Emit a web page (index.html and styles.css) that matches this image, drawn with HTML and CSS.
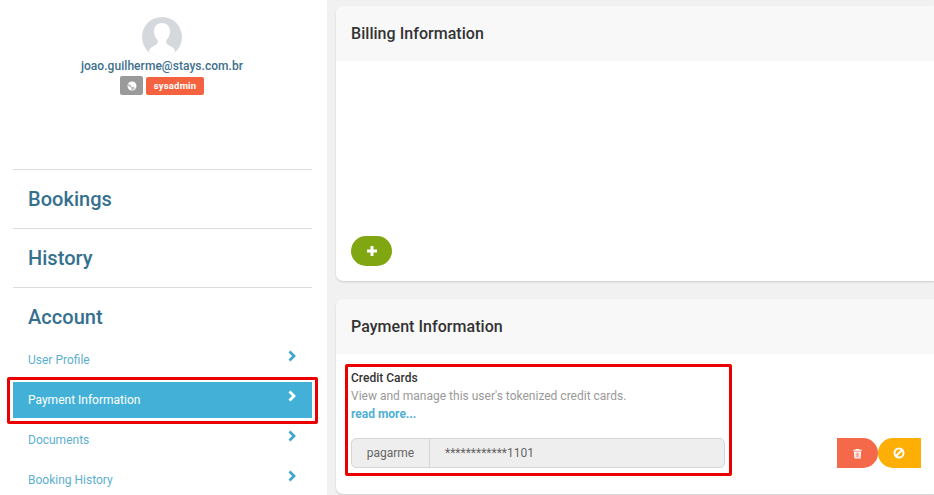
FILE: index.html
```html
<!DOCTYPE html>
<html lang="en">
<head>
<meta charset="utf-8">
<title>Payment Information</title>
<link rel="stylesheet" href="styles.css">
</head>
<body>
<div class="page">
  <aside class="sidebar">
    <div class="profile">
      <svg class="avatar" viewBox="0 0 40 40" width="40" height="40" aria-hidden="true">
        <defs><clipPath id="av"><circle cx="20" cy="20" r="20"/></clipPath></defs>
        <g clip-path="url(#av)">
          <rect width="40" height="40" fill="#d5d9dd"/>
          <path d="M20 6c-5 0-8 3.500-8 8.500 0 3.500 1.500 6.500 3.500 8.500 .6 1.500 .4 3-.5 4-2 2-6 3-7.500 5.500-1 2-1 5-1 8h27c0-3 0-6-1-8-1.500-2.500-5.500-3.500-7.500-5.500-.9-1-1.100-2.500-.5-4 2-2 3.500-5 3.500-8.500C28 9.500 25 6 20 6z" fill="#fff"/>
        </g>
      </svg>
      <div class="email">joao.guilherme@stays.com.br</div>
      <div class="badges">
        <span class="badge badge-globe">
          <svg viewBox="0 0 10 10" width="10" height="10" aria-hidden="true"><circle cx="5" cy="5" r="4.500" fill="#fff"/><path d="M1 3 4 4 4.500 6 6.500 5.500 8 7 6 9 4.500 9 4 6.500 1 5z" fill="#a5a5a5" opacity=".7"/></svg>
        </span>
        <span class="badge badge-role">sysadmin</span>
      </div>
    </div>
    <nav class="nav">
      <div class="section">Bookings</div>
      <div class="section">History</div>
      <div class="section section-open">Account</div>
      <a class="item">User Profile<svg class="chev" viewBox="0 0 8 12" width="8" height="12"><path d="M1.500 1.500 6 6l-4.500 4.500"/></svg></a>
      <a class="item item-active">Payment Information<svg class="chev" viewBox="0 0 8 12" width="8" height="12"><path d="M1.500 1.500 6 6l-4.500 4.500"/></svg></a>
      <a class="item">Documents<svg class="chev" viewBox="0 0 8 12" width="8" height="12"><path d="M1.500 1.500 6 6l-4.500 4.500"/></svg></a>
      <a class="item">Booking History<svg class="chev" viewBox="0 0 8 12" width="8" height="12"><path d="M1.500 1.500 6 6l-4.500 4.500"/></svg></a>
    </nav>
  </aside>
  <main class="main">
    <section class="card card-billing">
      <h2 class="card-head">Billing Information</h2>
      <div class="billing-body">
        <button class="add" aria-label="Add">
          <svg viewBox="0 0 12 12" width="12" height="12"><path d="M6 1v10M1 6h10"/></svg>
        </button>
      </div>
    </section>
    <section class="card">
      <h2 class="card-head">Payment Information</h2>
      <div class="pay-body">
        <div class="cards-block">
          <div class="cc-title">Credit Cards</div>
          <div class="cc-desc">View and manage this user's tokenized credit cards.</div>
          <a class="cc-more">read more...</a>
          <div class="cc-input">
            <span class="cc-gateway">pagarme</span>
            <span class="cc-number">************1101</span>
          </div>
        </div>
        <div class="actions">
          <button class="act act-del" aria-label="Delete">
            <svg viewBox="0 0 10 10" width="11" height="11"><path fill="#fff" d="M3.500.8h3l.4.8H9v1H1v-1h2.100zM1.700 3.200h6.600L7.800 9.600H2.200z"/><path stroke="#f4694a" stroke-width=".6" d="M3.800 4.200v4.400M5 4.200v4.400M6.200 4.200v4.400"/></svg>
          </button>
          <button class="act act-ban" aria-label="Block">
            <svg viewBox="0 0 12 12" width="12" height="12"><circle cx="6" cy="6" r="4.500" fill="none" stroke="#fff" stroke-width="2"/><path d="M3 9 9 3" stroke="#fff" stroke-width="2"/></svg>
          </button>
        </div>
      </div>
    </section>
  </main>
</div>
<div class="mark mark-nav"></div>
<div class="mark mark-cards"></div>
</body>
</html>
```
FILE: styles.css
```css
* { box-sizing: border-box; }
html, body { margin: 0; height: 495px; overflow: hidden; }
body { font-family: Roboto, "Liberation Sans", sans-serif; background: #f1f1f1; position: relative; }
.page { display: flex; width: 934px; height: 495px; }

.sidebar { width: 327px; flex: none; background: #fff; padding: 0 15px 0 13px; }
.profile { height: 169px; padding: 17px 1px 0 0; display: flex; flex-direction: column; align-items: center; }
.avatar { display: block; margin-right: 1px; }
.email { margin-top: 2px; font-size: 12px; line-height: 14px; font-weight: 500; color: #3e6f8e; letter-spacing: .05px; white-space: nowrap; }
.badges { display: flex; align-items: center; gap: 3px; margin-top: 3px; }
.badge { display: flex; align-items: center; justify-content: center; height: 18px; border-radius: 2px; color: #fff; }
.badge-globe { width: 23px; height: 19px; background: #9a9a9a; }
.badge-role { width: 58px; background: #f4623f; font-size: 9.500px; font-weight: 700; letter-spacing: .2px; }

.nav { display: flex; flex-direction: column; }
.section { height: 59px; border-top: 1px solid #dcdcdc; padding: 0 15px; display: flex; align-items: center; font-size: 20px; font-weight: 500; color: #36708f; letter-spacing: .04px; }
.section-open { height: 53px; padding-top: 6px; }
.item { height: 40px; padding: 0 16px 0 15px; display: flex; align-items: center; justify-content: space-between; font-size: 12px; color: #5cafd0; }
.item .chev { margin-top: -9px; }
.chev path { fill: none; stroke: #42a5cc; stroke-width: 2.800; }
.item-active { margin: 2px 0; height: 36px; color: #fff; background: #43b1d7; font-weight: 400; }
.item-active .chev path { stroke: #fff; }

.main { flex: 1; min-width: 0; padding: 6px 0 0 9px; display: flex; flex-direction: column; gap: 18px; }
.card { background: #fff; border-radius: 7px 0 0 7px; box-shadow: 0 1px 2px rgba(0,0,0,.16); }
.card-billing { height: 275px; display: flex; flex-direction: column; flex: none; }
.card-head { margin: 0; height: 55px; padding: 0 15px; display: flex; align-items: center; background: #f8f8f8; font-size: 16px; font-weight: 500; color: #333; letter-spacing: .04px; border-radius: 7px 0 0 0; }
.billing-body { flex: 1; padding: 175px 15px 0; }
.add { width: 41px; height: 30px; border: 0; border-radius: 15px; background: #80a612; display: flex; align-items: center; justify-content: center; padding: 0; }
.add path { stroke: #fff; stroke-width: 3; }

.pay-body { display: flex; justify-content: space-between; align-items: flex-end; padding: 15px 13px 26px 15px; }
.cards-block { width: 374px; }
.cc-title { font-size: 12px; line-height: 18px; font-weight: 500; color: #333; }
.cc-desc { font-size: 12px; line-height: 18px; color: #999; }
.cc-more { display: block; font-size: 12px; line-height: 18px; font-weight: 700; color: #4fb0d5; }
.cc-input { margin-top: 15px; height: 30px; display: flex; align-items: center; background: #eee; border: 1px solid #d6d6d6; border-radius: 5px; font-size: 12px; color: #666; }
.cc-gateway { width: 78px; height: 100%; display: flex; align-items: center; justify-content: center; border-right: 1px solid #d6d6d6; }
.cc-number { padding-left: 15px; }
.actions { display: flex; }
.act { height: 30px; border: 0; padding: 0; display: flex; align-items: center; justify-content: center; }
.act-del { width: 41px; background: #f4694a; border-radius: 0 15px 15px 0; }
.act-ban { width: 43px; padding-right: 1px; background: #fdaf06; border-radius: 15px 0 0 15px; }

.mark { position: absolute; border: 3px solid #ea0000; border-radius: 2px; pointer-events: none; }
.mark-nav { left: 7px; top: 377px; width: 311px; height: 47px; }
.mark-cards { left: 345px; top: 364px; width: 387px; height: 112px; }
```
